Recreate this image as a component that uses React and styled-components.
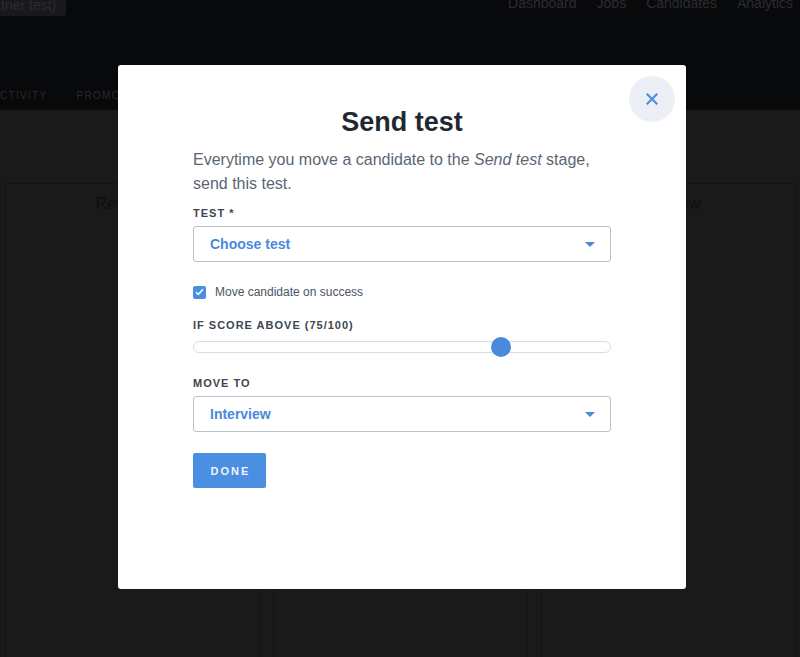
import React from 'react'
import styled, { createGlobalStyle } from 'styled-components'

const GlobalStyle = createGlobalStyle`
  * { box-sizing: border-box; }
  html, body {
    margin: 0;
    padding: 0;
    background: #343434;
    font-family: "Liberation Sans", Arial, sans-serif;
    overflow: hidden;
  }
`;

const Page = styled.div`
  width: 800px;
  height: 657px;
  background: #343434;
  overflow: hidden;
`;

const Header = styled.header`
  height: 110px;
  background: #101216;
  display: flex;
  flex-direction: column;
  justify-content: space-between;
`;

const TopBar = styled.div`
  display: flex;
  justify-content: space-between;
  align-items: flex-start;
`;

const JobTag = styled.div`
  height: 16px;
  padding: 0 10px 0 1px;
  background: #303236;
  border-radius: 0 0 3px 0;
  color: #56585e;
  font-size: 14px;
  line-height: 11px;
  overflow: hidden;
`;

const Nav = styled.nav`
  display: flex;
  gap: 20px;
  margin-top: -4px;
  padding-right: 7px;
`;

const NavLink = styled.span`
  color: #56585e;
  font-size: 14px;
  line-height: 14px;
`;

const Tabs = styled.div`
  display: flex;
  gap: 29px;
  padding: 0 0 8px 0;
`;

const Tab = styled.span`
  color: #505256;
  font-size: 10px;
  letter-spacing: 1.3px;
  line-height: 12px;
`;

const Board = styled.div`
  display: grid;
  grid-template-columns: repeat(3, 1fr);
  gap: 13px;
  padding: 73px 4px 0 5px;
`;

const Column = styled.div`
  height: 520px;
  border: 1px solid #282828;
  padding-top: 10px;
  text-align: center;
`;

const ColumnTitle = styled.div`
  color: #1c1c1c;
  font-size: 16px;
  line-height: 20px;
`;

const Overlay = styled.div`
  position: fixed;
  inset: 0;
  background: rgba(0, 0, 0, 0.5);
  display: flex;
  justify-content: center;
  align-items: center;
  padding: 0 0 3px 4px;
`;

const Modal = styled.div`
  position: relative;
  width: 568px;
  height: 524px;
  background: #ffffff;
  border-radius: 3px;
  padding: 41px 75px 0;
`;

const CloseButton = styled.button`
  position: absolute;
  top: 11px;
  right: 11px;
  width: 46px;
  height: 46px;
  border-radius: 50%;
  border: none;
  background: #eceff3;
  display: flex;
  align-items: center;
  justify-content: center;
  padding: 0;
`;

const Title = styled.h2`
  margin: 0;
  text-align: center;
  font-size: 27px;
  line-height: 32px;
  font-weight: 700;
  color: #1f2933;
`;

const Intro = styled.p`
  margin: 10px 0 0;
  font-size: 16px;
  line-height: 24px;
  color: #5b6673;
`;

const Label = styled.div`
  margin-top: ${p => p.$top}px;
  font-size: 11px;
  line-height: 16px;
  font-weight: 700;
  letter-spacing: 1px;
  color: #3b4652;
  text-transform: uppercase;
`;

const Select = styled.div`
  margin-top: 5px;
  height: 36px;
  border: 1px solid #b7c2cf;
  border-radius: 3px;
  display: flex;
  align-items: center;
  justify-content: space-between;
  padding: 0 15px 0 16px;
  color: #4a89dc;
  font-size: 14px;
  font-weight: 700;
`;

const Caret = styled.span`
  width: 0;
  height: 0;
  border-left: 5px solid transparent;
  border-right: 5px solid transparent;
  border-top: 5px solid #4a89dc;
`;

const CheckRow = styled.label`
  margin-top: 22px;
  height: 16px;
  display: flex;
  align-items: center;
  gap: 9px;
  font-size: 12px;
  color: #4a5561;
`;

const Box = styled.span`
  width: 13px;
  height: 13px;
  border-radius: 2px;
  background: #4a8fe2;
  display: flex;
  align-items: center;
  justify-content: center;
`;

const Track = styled.div`
  position: relative;
  margin-top: 8px;
  height: 12px;
  border: 1px solid #d7dde3;
  border-radius: 6px;
`;

const Thumb = styled.span`
  position: absolute;
  top: 50%;
  width: 20px;
  height: 20px;
  margin: -10px 0 0 -10px;
  border-radius: 50%;
  background: #4a89dc;
`;

const DoneButton = styled.button`
  margin-top: 21px;
  width: 73px;
  height: 35px;
  border: none;
  border-radius: 2px;
  background: #4a8fe2;
  color: #eef4fc;
  font-family: "Liberation Sans", Arial, sans-serif;
  font-size: 11px;
  font-weight: 700;
  letter-spacing: 2px;
  padding: 0 0 0 2px;
`;

const score = 75;

export default function App() {
  return (
    <>
      <GlobalStyle />
      <Page>
        <Header>
          <TopBar>
            <JobTag>tner test)</JobTag>
            <Nav>
              <NavLink>Dashboard</NavLink>
              <NavLink>Jobs</NavLink>
              <NavLink>Candidates</NavLink>
              <NavLink>Analytics</NavLink>
            </Nav>
          </TopBar>
          <Tabs>
            <Tab>CTIVITY</Tab>
            <Tab>PROMOTION</Tab>
          </Tabs>
        </Header>
        <Board>
          <Column><ColumnTitle>Reviewing</ColumnTitle></Column>
          <Column><ColumnTitle>Send test</ColumnTitle></Column>
          <Column><ColumnTitle>Interview</ColumnTitle></Column>
        </Board>
      </Page>

      <Overlay>
        <Modal>
          <CloseButton aria-label="Close">
            <svg width="12" height="12" viewBox="0 0 12 12">
              <path d="M1.5 1.5l9 9M10.5 1.5l-9 9" stroke="#4a8fe2" strokeWidth="2.2" strokeLinecap="square" />
            </svg>
          </CloseButton>
          <Title>Send test</Title>
          <Intro>
            Everytime you move a candidate to the <em>Send test</em> stage, send this test.
          </Intro>

          <Label $top={9}>Test *</Label>
          <Select>
            Choose test
            <Caret />
          </Select>

          <CheckRow>
            <Box>
              <svg width="9" height="8" viewBox="0 0 9 8">
                <path d="M1 4.2l2.3 2.3L8 1.2" stroke="#fff" strokeWidth="1.5" fill="none" />
              </svg>
            </Box>
            Move candidate on success
          </CheckRow>

          <Label $top={17}>If score above ({score}/100)</Label>
          <Track>
            <Thumb style={{ left: `calc(10px + (100% - 20px) * ${score / 100})` }} />
          </Track>

          <Label $top={22}>Move to</Label>
          <Select>
            Interview
            <Caret />
          </Select>

          <DoneButton>DONE</DoneButton>
        </Modal>
      </Overlay>
    </>
  )
}
